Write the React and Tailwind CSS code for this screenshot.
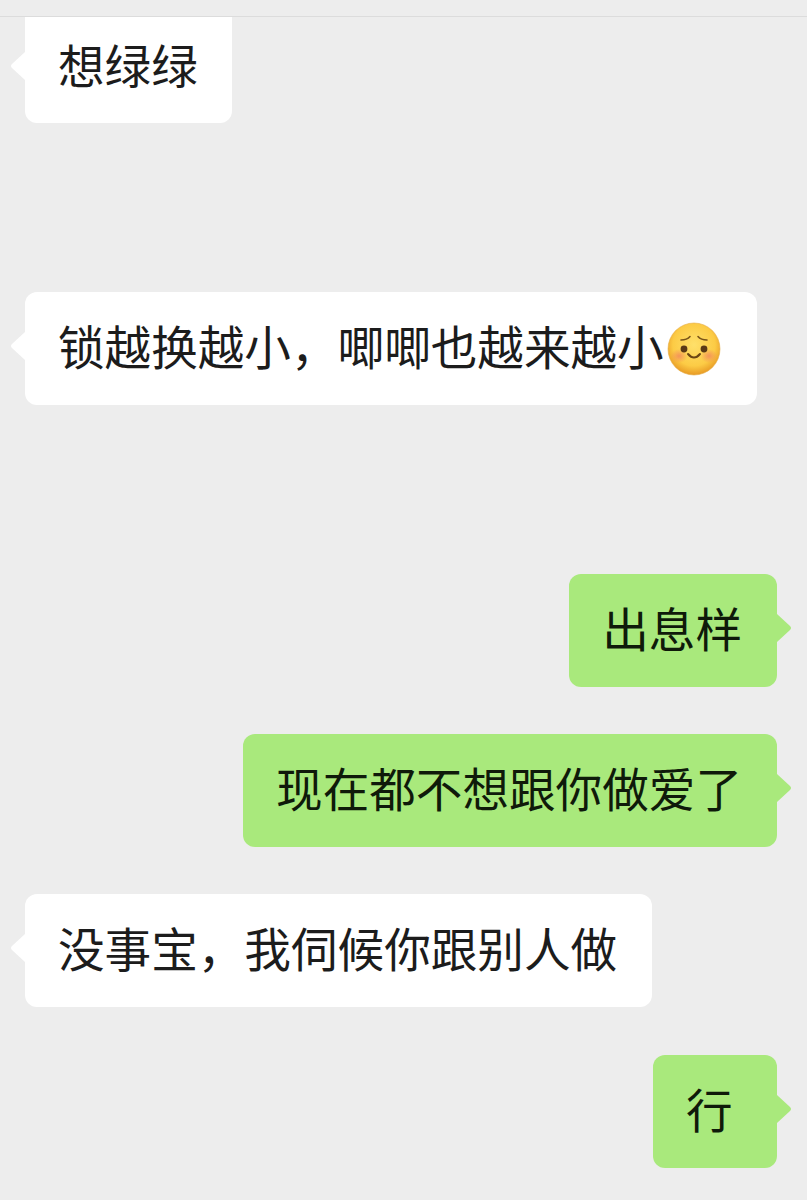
const font = { fontFamily: '"Noto Sans CJK SC", "Noto Sans", sans-serif' };

function Face() {
  return (
    <svg width="56" height="56" viewBox="0 0 56 56" className="shrink-0 ml-[2px] mt-[8px]">
      <defs>
        <radialGradient id="face" cx="50%" cy="42%" r="58%">
          <stop offset="0%" stopColor="#ffe06a" />
          <stop offset="70%" stopColor="#fccb45" />
          <stop offset="100%" stopColor="#e89a24" />
        </radialGradient>
        <radialGradient id="blush">
          <stop offset="0%" stopColor="#f28a5c" stopOpacity="0.85" />
          <stop offset="100%" stopColor="#f28a5c" stopOpacity="0" />
        </radialGradient>
      </defs>
      <circle cx="28" cy="28" r="26" fill="url(#face)" stroke="#e6ae48" strokeWidth="0.6" />
      <ellipse cx="13" cy="35" rx="8.5" ry="7" fill="url(#blush)" />
      <ellipse cx="43" cy="35" rx="8.5" ry="7" fill="url(#blush)" />
      <circle cx="18" cy="28" r="3.4" fill="#5b3a16" />
      <circle cx="38" cy="28" r="3.4" fill="#5b3a16" />
      <path d="M15 19 Q21 19 24 15.5" fill="none" stroke="#7a5418" strokeWidth="1.6" strokeLinecap="round" />
      <path d="M41 19 Q35 19 32 15.5" fill="none" stroke="#7a5418" strokeWidth="1.6" strokeLinecap="round" />
      <path d="M22 33 Q28 40 34 33" fill="none" stroke="#6b4614" strokeWidth="2" strokeLinecap="round" />
    </svg>
  );
}

function Bubble({ mine, children, className = "", tailClass = "top-[40px]" }) {
  return (
    <div
      className={`relative flex items-center rounded-[12px] pl-[33px] pr-[35px] text-[46.6px] leading-[100px] whitespace-nowrap ${
        mine ? "bg-[#a9e97c] text-[#0f1a0a]" : "bg-white text-[#1c1c1c]"
      } ${className}`}
    >
      {mine ? (
        <span className={`absolute left-full ${tailClass}`}>
          <svg width="15" height="28" viewBox="0 0 15 28" className="block">
            <path d="M0 0 L13 12 Q15 14 13 16 L0 28 Z" fill="#a9e97c" />
          </svg>
        </span>
      ) : (
        <span className={`absolute right-full ${tailClass}`}>
          <svg width="15" height="28" viewBox="0 0 15 28" className="block">
            <path d="M15 0 L2 12 Q0 14 2 16 L15 28 Z" fill="#ffffff" />
          </svg>
        </span>
      )}
      {children}
    </div>
  );
}

export default function App() {
  return (
    <div className="w-[807px] h-[1200px] overflow-hidden bg-[#ededed]" style={font}>
      <div className="h-[17px] border-b border-[#dcdcdc]" />
      <div className="flex flex-col pl-[25px] pr-[30px]">
        <Bubble className="self-start h-[106px] w-[207px] rounded-t-none pb-[12px]" tailClass="top-[35px]">想绿绿</Bubble>
        <Bubble className="self-start h-[113px] mt-[169px] pb-[8px]">
          锁越换越小，唧唧也越来越小
          <Face />
        </Bubble>
        <Bubble mine className="self-end h-[113px] mt-[169px] pb-[8px]">出息样</Bubble>
        <Bubble mine className="self-end h-[113px] mt-[47px] pb-[8px]">现在都不想跟你做爱了</Bubble>
        <Bubble className="self-start h-[113px] mt-[47px] pb-[8px]">没事宝，我伺候你跟别人做</Bubble>
        <Bubble mine className="self-end h-[113px] min-w-[124px] mt-[48px] pb-[8px]">行</Bubble>
      </div>
    </div>
  );
}
